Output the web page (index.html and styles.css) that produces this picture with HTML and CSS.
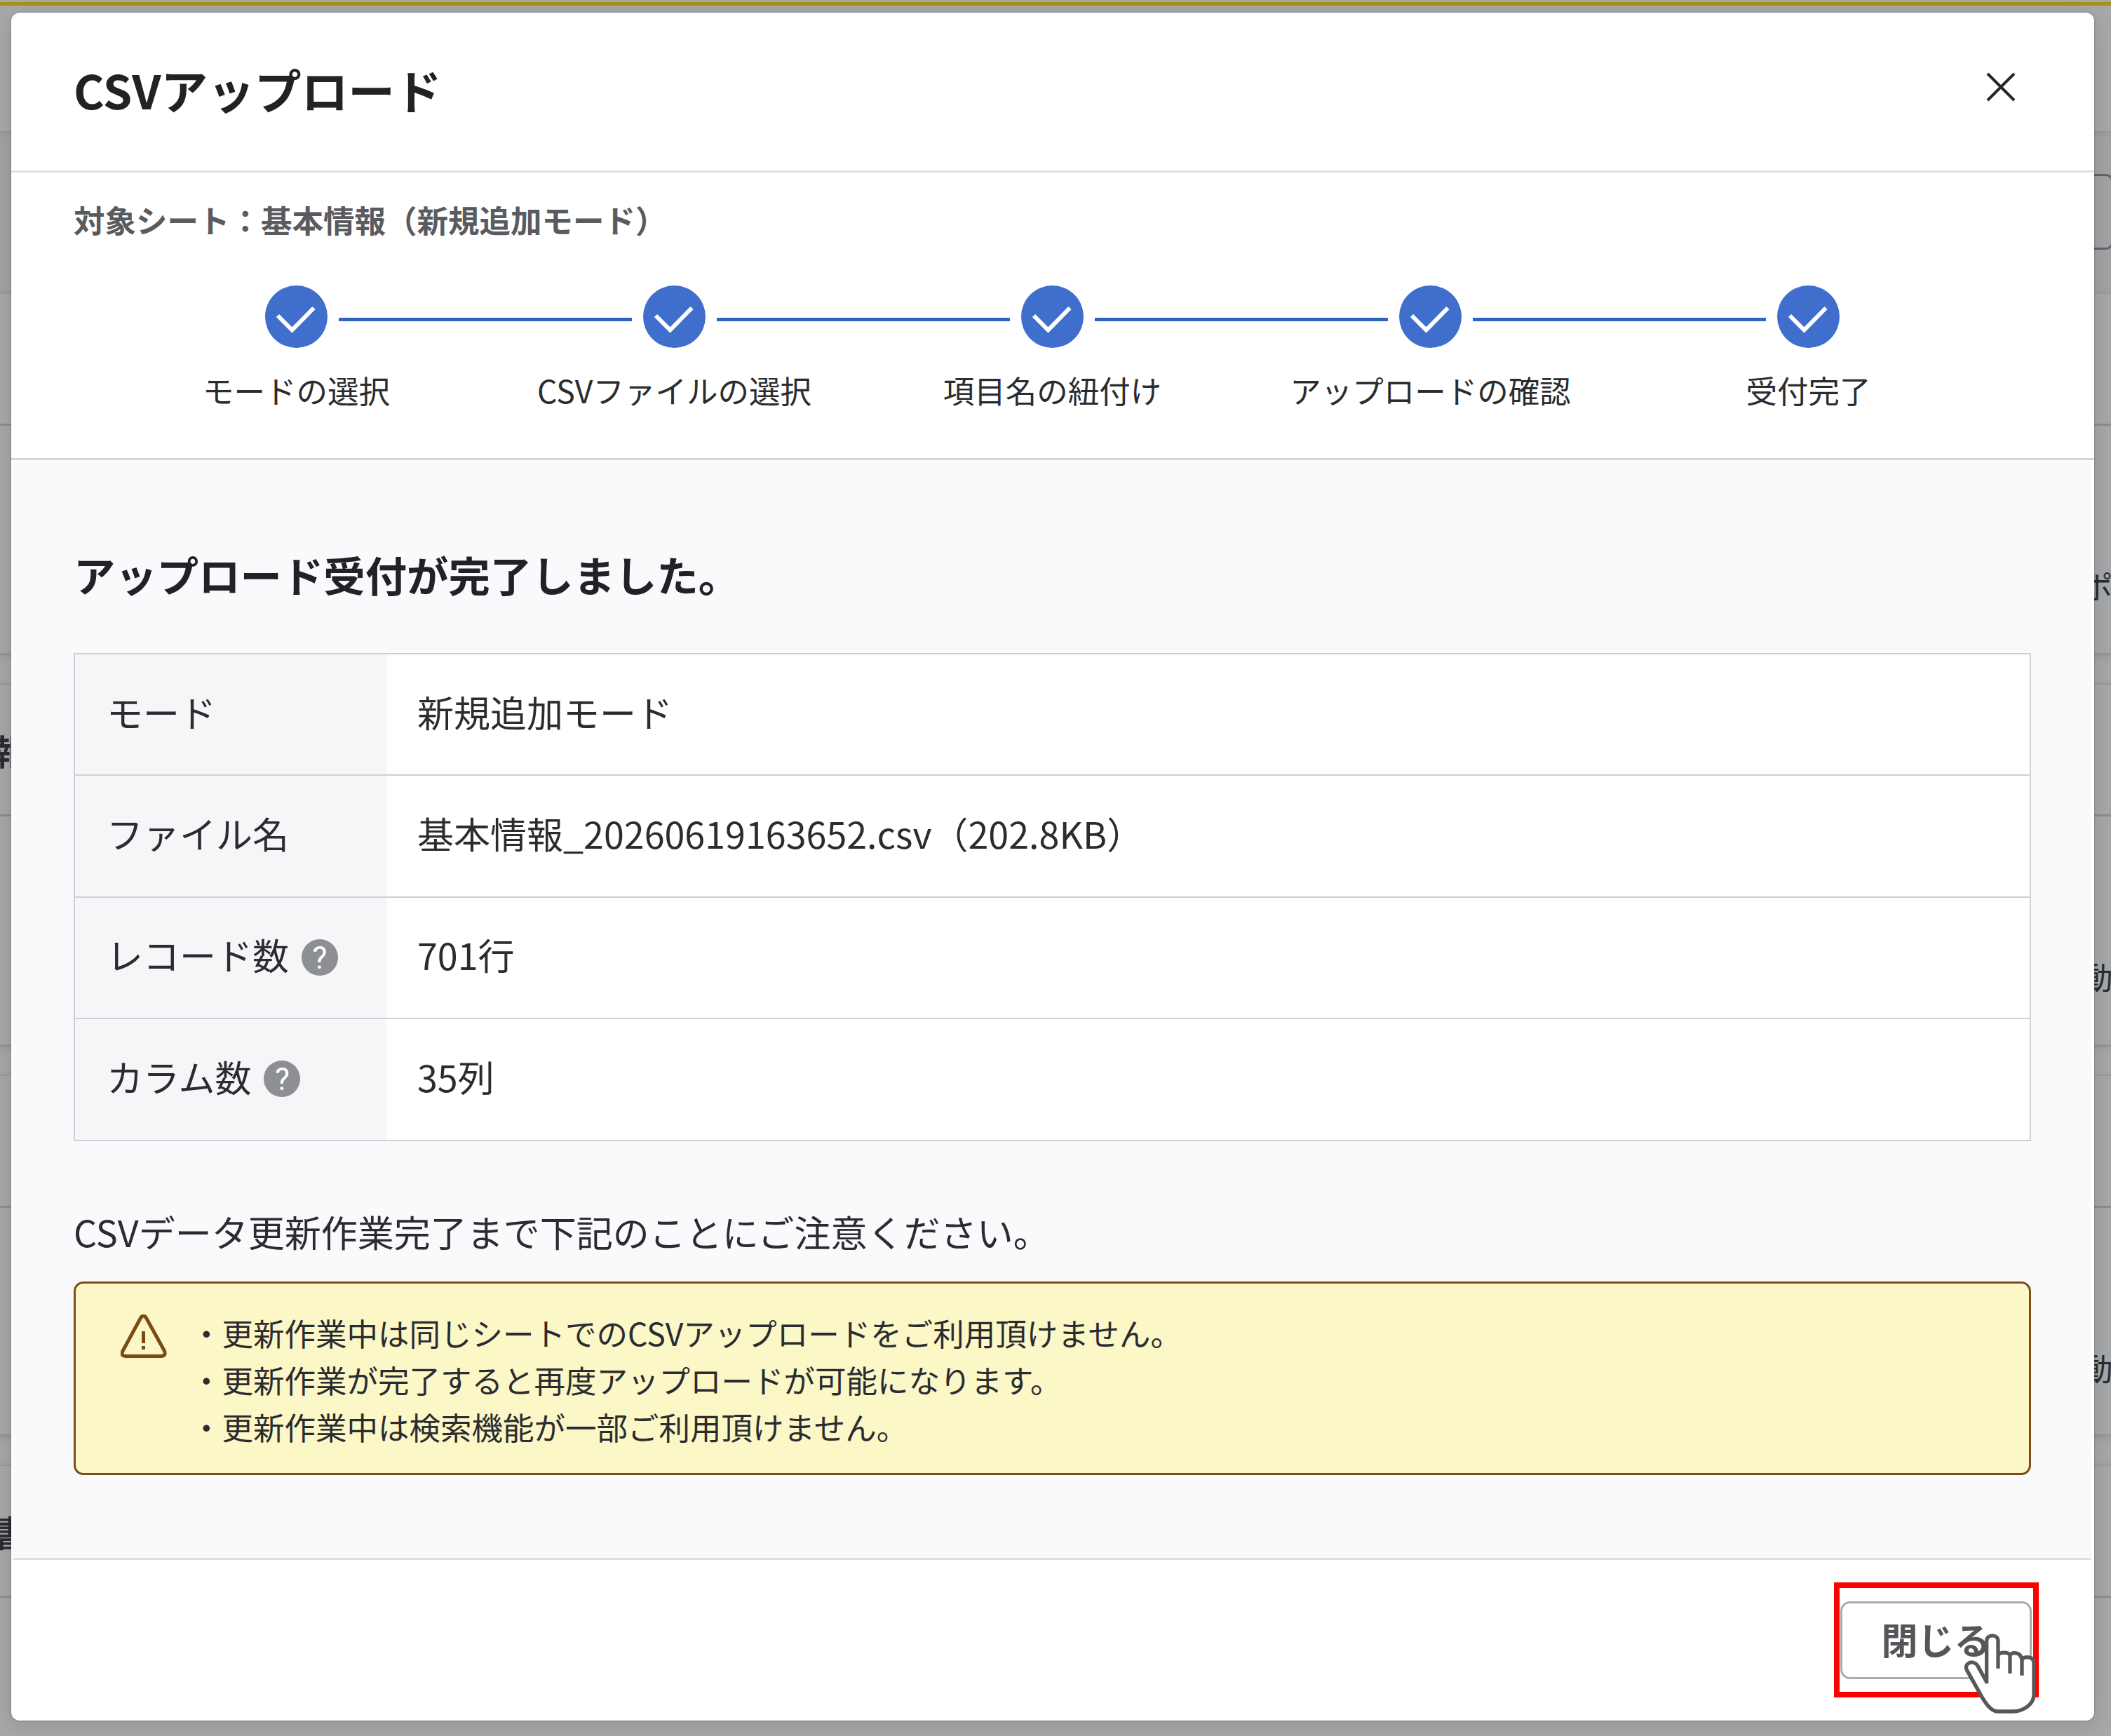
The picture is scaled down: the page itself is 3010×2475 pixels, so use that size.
FILE: index.html
```
<!DOCTYPE html>
<html lang="ja">
<head>
  <meta charset="utf-8">
  <title>CSVアップロード</title>
  <link rel="stylesheet" href="styles.css">
</head>
<body>
  <!-- 背景のページ -->
  <div class="page">
    <div class="page-top"></div>
    <div class="toolbar"><span class="toolbar-box"></span></div>
    <div class="panel panel-first">
      <div class="panel-head"></div>
      <div class="panel-body"><span class="cut-right">ポ</span></div>
    </div>
    <div class="panel panel-second">
      <div class="panel-head"><span class="cut-left">報</span></div>
      <div class="panel-body"><span class="cut-right">動</span></div>
    </div>
    <div class="panel panel-third">
      <div class="panel-head"></div>
      <div class="panel-body"><span class="cut-right">動</span></div>
    </div>
    <div class="panel panel-last">
      <div class="panel-head"><span class="cut-left">書</span></div>
      <div class="panel-body"></div>
    </div>
  </div>

  <div class="modal">
    <div class="modal-header">
      <h1>CSVアップロード</h1>
      <svg class="close" viewBox="0 0 42 42"><path d="M2 2L40 40M40 2L2 40"/></svg>
    </div>

    <div class="steps-area">
      <p class="target">対象シート：基本情報（新規追加モード）</p>
      <div class="steps">
        <div class="step">
          <svg class="check" viewBox="0 0 89 89"><circle cx="44.5" cy="44.5" r="44.5"/><path d="M18 43L38.500 63.500L69.500 32"/></svg>
          <span>モードの選択</span>
        </div>
        <div class="step">
          <svg class="check" viewBox="0 0 89 89"><circle cx="44.5" cy="44.5" r="44.5"/><path d="M18 43L38.500 63.500L69.500 32"/></svg>
          <span>CSVファイルの選択</span>
        </div>
        <div class="step">
          <svg class="check" viewBox="0 0 89 89"><circle cx="44.5" cy="44.5" r="44.5"/><path d="M18 43L38.500 63.500L69.500 32"/></svg>
          <span>項目名の紐付け</span>
        </div>
        <div class="step">
          <svg class="check" viewBox="0 0 89 89"><circle cx="44.5" cy="44.5" r="44.5"/><path d="M18 43L38.500 63.500L69.500 32"/></svg>
          <span>アップロードの確認</span>
        </div>
        <div class="step">
          <svg class="check" viewBox="0 0 89 89"><circle cx="44.5" cy="44.5" r="44.5"/><path d="M18 43L38.500 63.500L69.500 32"/></svg>
          <span>受付完了</span>
        </div>
      </div>
    </div>

    <div class="modal-body">
      <h2>アップロード受付が完了しました。</h2>
      <div class="info">
        <div class="row">
          <div class="label">モード</div>
          <div class="value">新規追加モード</div>
        </div>
        <div class="row">
          <div class="label">ファイル名</div>
          <div class="value">基本情報_20260619163652.csv（202.8KB）</div>
        </div>
        <div class="row">
          <div class="label">レコード数<span class="help">?</span></div>
          <div class="value">701行</div>
        </div>
        <div class="row">
          <div class="label">カラム数<span class="help">?</span></div>
          <div class="value">35列</div>
        </div>
      </div>
      <p class="note">CSVデータ更新作業完了まで下記のことにご注意ください。</p>
      <div class="alert">
        <svg class="warn" viewBox="0 0 66 62"><path d="M28.500 5Q32.500 -1 36.500 5L62.500 52Q65 59 58 59.500H7Q0 59 3 52Z"/><path d="M32.500 24V41M32.500 45V50"/></svg>
        <ul>
          <li>・更新作業中は同じシートでのCSVアップロードをご利用頂けません。</li>
          <li>・更新作業が完了すると再度アップロードが可能になります。</li>
          <li>・更新作業中は検索機能が一部ご利用頂けません。</li>
        </ul>
      </div>
    </div>

    <div class="modal-footer">
      <button>閉じる</button>
    </div>
  </div>

  <div class="highlight"></div>
  <svg class="hand" viewBox="750 385 312 348"><path d="M848 602V420C848 389 897 389 897 420V480C906 466 940 466 948 480C958 466 992 466 999 498C1012 484 1050 484 1050 515V650C1050 690 1005 721 960 721H895C870 721 850 696 830 663L764 545C748 516 790 498 808 523L848 595M897 480V537M948 480V558M999 490V567"/></svg>
</body>
</html>
```
FILE: styles.css
```
* {
  box-sizing: border-box;
}

body {
  margin: 0;
  width: 3010px;
  height: 2475px;
  overflow: hidden;
  position: relative;
  background-color: #a7a8aa;
  color: #2a2c30;
  font-family: "Noto Sans CJK JP", sans-serif;
}

h1, h2, p, ul {
  margin: 0;
  padding: 0;
}

/* 背景 */
.page {
  height: 2475px;
  overflow: hidden;
  padding-top: 3px;
}

.page-top {
  height: 184px;
  border-top: 5px solid #ab9212;
}

.toolbar {
  height: 230px;
  background: linear-gradient(#98999b, #a2a3a5 10px);
  padding-top: 61px;
  display: flex;
  justify-content: flex-end;
}

.toolbar-box {
  width: 200px;
  height: 108px;
  margin-right: -3px;
  border: 3px solid #636468;
  border-radius: 10px;
}

.panel {
  border-top: 2px solid #989a9c;
  border-bottom: 3px solid #949698;
  background-color: #a7a8aa;
  margin-bottom: 40px;
  box-shadow: 0 3px 10px #98999b;
}

.panel-head {
  height: 188px;
  border-bottom: 3px solid #8c8e91;
  display: flex;
  align-items: center;
}

.panel-body {
  display: flex;
  justify-content: flex-end;
}

.panel-first {
  height: 517px;
}

.panel-second {
  height: 518px;
}

.panel-third {
  height: 516px;
}

.panel-last {
  height: 460px;
}

.cut-right {
  width: 42px;
  margin-top: 195px;
  font-size: 44.500px;
  line-height: 66px;
  white-space: nowrap;
}

.cut-left {
  font-size: 50px;
  font-weight: bold;
  line-height: 70px;
  margin-left: -10px;
}

/* モーダル */
.modal {
  position: absolute;
  top: 18px;
  left: 16px;
  width: 2970px;
  height: 2435px;
  background-color: #fff;
  border-radius: 12px;
  box-shadow: 0 8px 34px rgba(0, 0, 0, 0.13), 0 0 3px rgba(0, 0, 0, 0.3);
  display: flex;
  flex-direction: column;
}

.modal-header {
  height: 228px;
  border-bottom: 3px solid #dfe0e5;
  padding: 0 112px 0 89px;
  display: flex;
  justify-content: space-between;
}

h1 {
  font-size: 66.700px;
  line-height: 100px;
  margin-top: 59px;
  color: #202226;
}

.close {
  width: 42px;
  height: 42px;
  margin-top: 85px;
  stroke: #26282c;
  stroke-width: 4;
  fill: none;
}

.steps-area {
  height: 410px;
  border-bottom: 3px solid #d3d4d8;
  padding-top: 34px;
}

.target {
  margin-left: 89px;
  font-size: 44.500px;
  line-height: 66px;
  font-weight: bold;
  color: #5a5b5f;
}

.steps {
  display: flex;
  margin: 61px 0 0 137px;
}

.step {
  width: 539px;
  position: relative;
  display: flex;
  flex-direction: column;
  align-items: center;
  font-size: 44.500px;
  line-height: 66px;
}

.step + .step::before {
  content: "";
  position: absolute;
  top: 46px;
  left: -209px;
  width: 418px;
  height: 5px;
  background-color: #3162c8;
}

.check {
  width: 89px;
  height: 89px;
  margin-bottom: 27px;
  fill: #3f6ecc;
}

.check path {
  fill: none;
  stroke: #fff;
  stroke-width: 6;
}

.modal-body {
  height: 1568px;
  margin: 0 4px 0 2px;
  padding: 117px 86px 0 87px;
  background-color: #fafafc;
  border-bottom: 3px solid #dfe0e5;
}

h2 {
  font-size: 59.400px;
  line-height: 90px;
  color: #202226;
}

.info {
  margin-top: 68px;
  border: 2px solid #cfd0d3;
  background-color: #fff;
  font-size: 52px;
}

.row {
  display: flex;
  height: 173.500px;
}

.row:first-child {
  height: 171px;
}

.row + .row {
  border-top: 2px solid #cfd0d3;
}

.label {
  width: 444px;
  padding: 0 0 9px 45px;
  background-color: #f6f6f8;
  display: flex;
  align-items: center;
}

.value {
  padding: 0 0 9px 44px;
  display: flex;
  align-items: center;
}

.help {
  width: 52px;
  height: 52px;
  margin: 8px 0 0 18px;
  border-radius: 50%;
  background-color: #8e8f93;
  color: #fff;
  font-family: Roboto, sans-serif;
  font-size: 44px;
  line-height: 55px;
  text-align: center;
}

.note {
  margin-top: 90px;
  font-size: 52px;
  line-height: 78px;
}

.alert {
  margin-top: 32px;
  height: 276px;
  border: 3px solid #7d4e17;
  border-radius: 14px;
  background-color: #fbf7c6;
  padding: 36px 0 0 64px;
  display: flex;
}

.warn {
  width: 66px;
  height: 62px;
  margin-top: 8px;
  fill: none;
  stroke: #7a4a12;
  stroke-width: 5;
}

.alert ul {
  list-style: none;
  margin-left: 34px;
  font-size: 44.500px;
  line-height: 67.300px;
}

.modal-footer {
  flex: 1;
  display: flex;
  justify-content: flex-end;
  padding: 59px 89px 0 0;
}

button {
  width: 273px;
  height: 111px;
  border: 3px solid #aaabaf;
  border-radius: 14px;
  background-color: #fff;
  color: #55565a;
  font-family: inherit;
  font-size: 52px;
  font-weight: bold;
  padding: 0 0 5px;
}

/* クリック位置の強調 */
.highlight {
  position: absolute;
  left: 2615px;
  top: 2256px;
  width: 292px;
  height: 164px;
  border: 8px solid #f00;
}

.hand {
  position: absolute;
  left: 2800px;
  top: 2328px;
  width: 104px;
  height: 116px;
  fill: #fff;
  stroke: #595757;
  stroke-width: 16;
}
```
